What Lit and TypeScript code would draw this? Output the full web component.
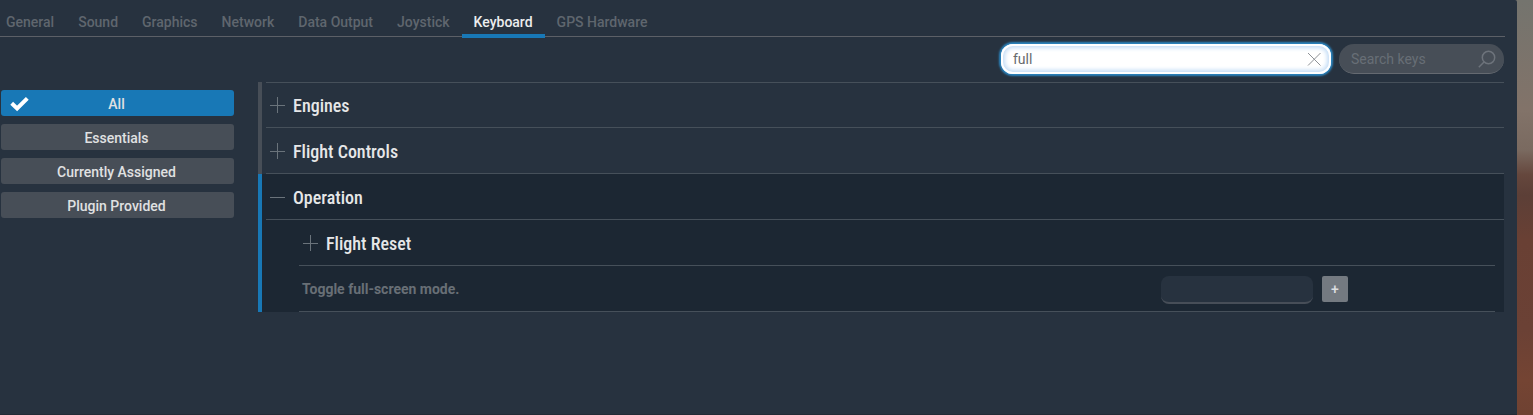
import { LitElement, html, css, svg } from "lit";
import { customElement, property, state } from "lit/decorators.js";
import { classMap } from "lit/directives/class-map.js";

@customElement("tree-row")
class TreeRow extends LitElement {
  @property() label = "";
  @property({ type: Boolean }) open = false;

  static styles = css`
    :host {
      display: block;
    }
    .row {
      display: flex;
      align-items: center;
      gap: 8px;
      width: 100%;
      height: 46px;
      box-sizing: border-box;
      padding: 1px 4px 0;
      border: 0;
      border-bottom: 1px solid #46505a;
      background: none;
      color: #e6e7e8;
      font: 500 18px/24px "Roboto Condensed", Roboto, sans-serif;
      text-align: left;
      cursor: pointer;
    }
    .icon {
      width: 15px;
      height: 16px;
      fill: none;
      stroke: #6a737b;
      stroke-width: 1;
    }
    .title {
      padding-top: 2px;
    }
  `;

  render() {
    return html`<button class="row" aria-expanded=${this.open ? "true" : "false"}>
      <svg class="icon" viewBox="0 0 15 16" aria-hidden="true">
        <path d="M0 8.5H15" />
        ${this.open ? null : svg`<path d="M7.5 0V16" />`}
      </svg>
      <span class="title">${this.label}</span>
    </button>`;
  }
}

@customElement("app-root")
class AppRoot extends LitElement {
  @state() tab = "Keyboard";
  @state() filter = "All";
  @state() query = "full";

  static styles = css`
    :host {
      display: block;
      font-family: Roboto, sans-serif;
      overflow: hidden;
    }
    * {
      box-sizing: border-box;
    }
    .screen {
      display: flex;
      min-height: 100vh;
      background: linear-gradient(
        to bottom,
        #74746e 0,
        #827369 110px,
        #7a6a60 150px,
        #65473d 175px,
        #5c3f37 195px,
        #694034 240px,
        #6b4135 330px,
        #744433 380px,
        #6f4232 415px
      );
    }
    .window {
      flex: 1;
      min-width: 0;
      padding-right: 12px;
      background: #27323f;
      border-bottom: 1px solid #222a35;
      border-top-right-radius: 2px;
    }
    .backdrop {
      width: 16px;
    }
    .tabs {
      display: flex;
      height: 37px;
      margin-left: -6px;
      border-bottom: 1px solid #5c6067;
    }
    .tab {
      height: 38px;
      padding: 10px 12px 0;
      border: 0;
      border-bottom: 4px solid transparent;
      background: none;
      color: #5f666e;
      font: 500 14px/20px Roboto, sans-serif;
      white-space: nowrap;
      cursor: pointer;
    }
    .tab.active {
      color: #ecedee;
      border-bottom-color: #1878b6;
    }
    .searches {
      display: flex;
      justify-content: flex-end;
      gap: 8px;
      padding: 7px 1px 8px 0;
    }
    .field {
      display: flex;
      align-items: center;
      height: 30px;
      padding: 0 8px 0 12px;
      border-radius: 15px;
    }
    .field input {
      flex: 1;
      min-width: 0;
      padding: 0;
      border: 0;
      outline: 0;
      background: none;
      font: 400 14px/20px Roboto, sans-serif;
    }
    .field.focused {
      width: 330px;
      border-radius: 12px;
      background: #ffffff;
      box-shadow:
        0 0 2px 2px #2b84be,
        inset 0 0 0 2px #ffffff,
        inset 0 0 4px 4px #c3dcf6;
    }
    .focused input {
      color: #666a6e;
    }
    .field.keys {
      width: 165px;
      background: #474e57;
      border-bottom: 1px solid #656a71;
    }
    .keys input::placeholder {
      color: #686e76;
      opacity: 1;
    }
    .clear {
      display: flex;
      padding: 0;
      border: 0;
      background: none;
      cursor: pointer;
    }
    .glyph {
      width: 18px;
      height: 18px;
      fill: none;
      stroke: #8d9196;
    }
    .glyph.lens {
      stroke: #6d737b;
      stroke-width: 1.5;
    }
    .content {
      display: flex;
      gap: 24px;
      padding: 0 1px;
    }
    .filters {
      display: flex;
      flex-direction: column;
      gap: 8px;
      width: 233px;
      padding-top: 8px;
    }
    .filter {
      display: grid;
      grid-template-columns: 20px 1fr 20px;
      align-items: center;
      height: 26px;
      padding: 2px 10px 0 8px;
      border: 0;
      border-radius: 3px;
      background: #474e57;
      color: #e0e1e2;
      font: 500 14px/20px Roboto, sans-serif;
      cursor: pointer;
    }
    .filter.active {
      background: #1878b6;
    }
    .check {
      width: 20px;
      height: 16px;
      fill: none;
      stroke: #ffffff;
      stroke-width: 4;
    }
    .caption {
      grid-column: 2;
    }
    .tree {
      flex: 1;
      min-width: 0;
    }
    .group {
      padding-left: 4px;
      border-left: 4px solid #474e57;
    }
    .first {
      display: block;
      height: 46px;
      overflow: hidden;
      border-top: 1px solid #46505a;
    }
    .first tree-row {
      display: block;
      margin-top: -1px;
    }
    .group.expanded {
      border-left-color: #1878b6;
      background: #1c2733;
    }
    .nested {
      padding: 0 9px 0 33px;
    }
    .command {
      display: grid;
      grid-template-columns: 1fr 152px 26px;
      align-items: start;
      column-gap: 9px;
      height: 46px;
      padding: 10px 147px 0 3px;
      border-bottom: 1px solid #46505a;
      color: #686f76;
      font: 700 14px/26px Roboto, sans-serif;
    }
    .binding {
      width: 100%;
      height: 28px;
      padding: 0 8px;
      border: 0;
      border-bottom: 2px solid #474e58;
      border-radius: 8px;
      background: #27323f;
      color: #e0e1e2;
      font: 400 14px/20px Roboto, sans-serif;
    }
    .add {
      display: flex;
      align-items: center;
      justify-content: center;
      width: 26px;
      height: 26px;
      padding: 0;
      border: 0;
      border-radius: 2px;
      background: #747a81;
      color: #dcdee0;
      font: 500 14px/20px Roboto, sans-serif;
      cursor: pointer;
    }
  `;

  private tabs = ["General", "Sound", "Graphics", "Network", "Data Output", "Joystick", "Keyboard", "GPS Hardware"];
  private filters = ["All", "Essentials", "Currently Assigned", "Plugin Provided"];

  render() {
    return html`<div class="screen">
      <main class="window">
        <nav class="tabs" role="tablist">
          ${this.tabs.map(
            (name) => html`<button
              class=${classMap({ tab: true, active: name === this.tab })}
              role="tab"
              aria-selected=${name === this.tab ? "true" : "false"}
              @click=${() => (this.tab = name)}
            >${name}</button>`
          )}
        </nav>
        <div class="searches">
          <div class="field focused">
            <input
              type="text"
              aria-label="Search commands"
              .value=${this.query}
              @input=${(e: Event) => (this.query = (e.target as HTMLInputElement).value)}
            />
            <button class="clear" aria-label="Clear search" @click=${() => (this.query = "")}>
              <svg class="glyph" viewBox="0 0 18 18"><path d="M3 3L15.5 15.5M15.5 3L3 15.5" /></svg>
            </button>
          </div>
          <div class="field keys">
            <input type="text" aria-label="Search keys" placeholder="Search keys" />
            <svg class="glyph lens" viewBox="0 0 18 18" aria-hidden="true">
              <circle cx="10.5" cy="7.5" r="6.2" />
              <path d="M6 12L0.8 17.2" />
            </svg>
          </div>
        </div>
        <div class="content">
          <div class="filters">
            ${this.filters.map(
              (name) => html`<button
                class=${classMap({ filter: true, active: name === this.filter })}
                @click=${() => (this.filter = name)}
              >
                ${name === this.filter
                  ? html`<svg class="check" viewBox="0 0 20 16" aria-hidden="true">
                      <path d="M2.7 7.3L8.1 12.5L18.3 2.3" />
                    </svg>`
                  : null}
                <span class="caption">${name}</span>
              </button>`
            )}
          </div>
          <section class="tree">
            <div class="group">
              <div class="first"><tree-row label="Engines"></tree-row></div>
              <tree-row label="Flight Controls"></tree-row>
            </div>
            <div class="group expanded">
              <tree-row label="Operation" open></tree-row>
              <div class="nested">
                <tree-row label="Flight Reset"></tree-row>
                <div class="command">
                  <label for="binding">Toggle full-screen mode.</label>
                  <input class="binding" id="binding" type="text" />
                  <button class="add" aria-label="Add binding">+</button>
                </div>
              </div>
            </div>
          </section>
        </div>
      </main>
      <div class="backdrop"></div>
    </div>`;
  }
}
